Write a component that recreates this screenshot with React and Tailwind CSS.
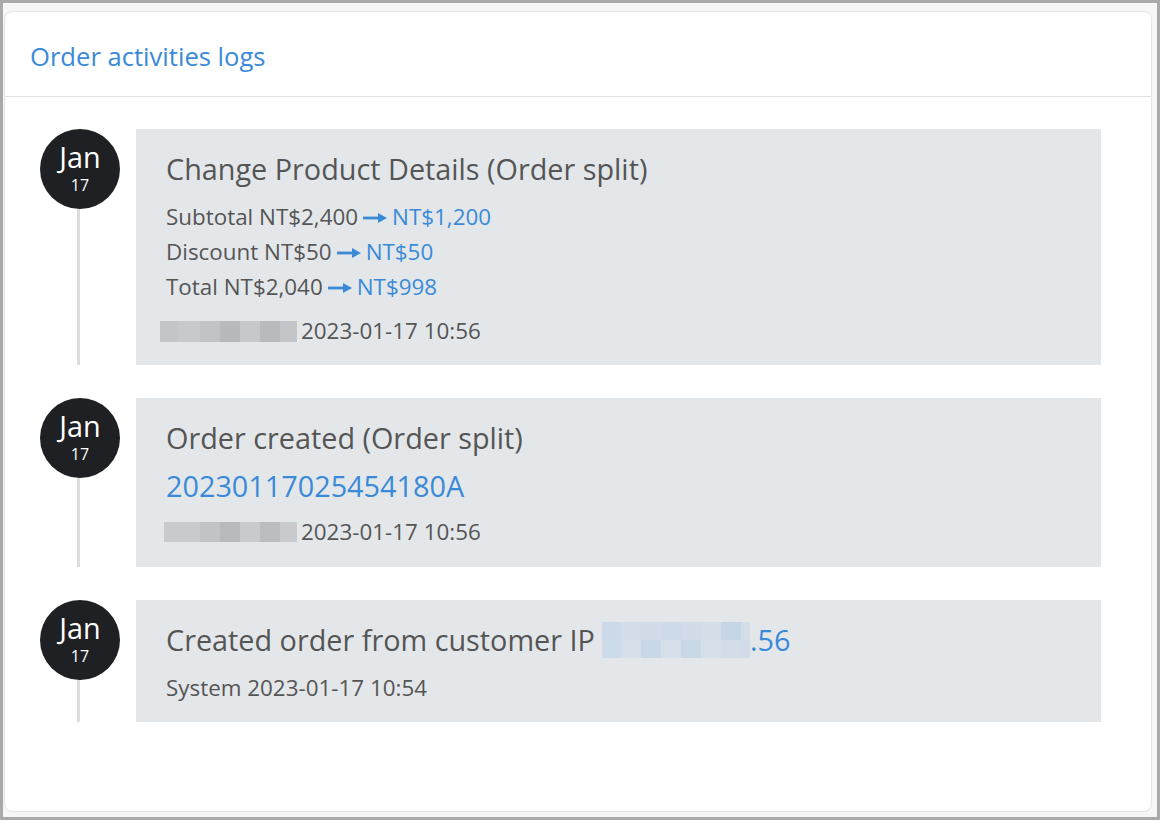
const blueText = "text-[#3a8ad8]";

const grayBlocks1 = ["#c3c5c8", "#c8c9cc", "#c2c3c6", "#b8b9bb", "#c6c8cb", "#b9babc", "#c4c5c8"];
const grayBlocks2 = ["#c9cacd", "#c9cacd", "#c2c3c6", "#b9babc", "#c9cacd", "#bbbcbe", "#c9cacd"];
const ipTop = ["#cbd9e8", "#d3dde9", "#d1dce8", "#cddae7", "#d1dce8", "#d4dee9", "#c6d6e7", "#d4dee9"];
const ipBottom = ["#cddae8", "#d6dfe9", "#c9d8e8", "#d5dfea", "#c9d8e7", "#d5dfea", "#d3dde9", "#d1dce8"];

const Pixelated = ({ colors, widths, className }) => (
  <span className={"inline-flex align-middle " + className}>
    {colors.map((c, i) => (
      <span key={i} className="h-full" style={{ backgroundColor: c, width: widths[i] }} />
    ))}
  </span>
);

const DateBadge = () => (
  <div className="w-20 h-20 shrink-0 rounded-full bg-[#1f2024] text-white flex flex-col items-center justify-center">
    <div className="text-[28.8px] leading-[28px] mt-[-1px]">Jan</div>
    <div className="text-[16px] leading-[18px] mt-[5px]">17</div>
  </div>
);

const TimelineRow = ({ last, children }) => (
  <div className={"flex gap-4 " + (last ? "" : "pb-[33px]")}>
    <div className="flex flex-col items-center w-20 shrink-0">
      <DateBadge />
      <div className="flex-1 w-[3px] bg-[#dcdcdc] ml-[-3px]" />
    </div>
    <div className="flex-1 bg-[#e4e7ea] px-[30px] pt-[22px]">{children}</div>
  </div>
);

const Arrow = () => (
  <svg className="inline-block mx-[5px] align-middle mt-[-3px]" width="24" height="12" viewBox="0 0 24 12" fill="#3a8ad8">
    <rect x="0" y="4.6" width="17" height="2.8" />
    <path d="M15 1 L24 6 L15 11 Z" />
  </svg>
);

export default function App() {
  return (
    <div className="w-[1160px] h-[820px] border-[3px] border-[#a9a9a9] bg-[#f6f6f6] pl-[1px] pt-[8px] pr-[5px] pb-[5px] text-[#555555]" style={{ fontFamily: '"Open Sans", "Noto Sans", sans-serif' }}>
      <div className="h-full bg-white border border-[#e5e5e5] rounded-lg flex flex-col">
        <div className="h-[85px] px-[25px] pt-[6px] flex items-center border-b border-[#e0e0e0]">
          <h2 className={"text-[25.6px] " + blueText}>Order activities logs</h2>
        </div>
        <div className="pt-8 pl-[35px] pr-[50px]">
          <TimelineRow>
            <div className="text-[28.8px] leading-[36px]">Change Product Details (Order split)</div>
            <div className="mt-3 text-[22.4px] leading-[35px]">
              <div>Subtotal NT$2,400<Arrow /><span className={blueText}>NT$1,200</span></div>
              <div>Discount NT$50<Arrow /><span className={blueText}>NT$50</span></div>
              <div>Total NT$2,040<Arrow /><span className={blueText}>NT$998</span></div>
            </div>
            <div className="mt-[13px] pb-5 text-[22.4px] leading-[28px] ml-[-6px] flex items-center">
              <Pixelated colors={grayBlocks1} widths={[18, 22, 20, 20, 20, 20, 17]} className="h-[21px]" />
              <span className="ml-[4px]">2023-01-17 10:56</span>
            </div>
          </TimelineRow>
          <TimelineRow>
            <div className="text-[28.8px] leading-[36px]">Order created (Order split)</div>
            <div className={"text-[28.8px] leading-[40px] mt-[10px] " + blueText}>20230117025454180A</div>
            <div className="mt-[12px] pb-[21px] text-[22.4px] leading-[28px] ml-[-2px] flex items-center">
              <Pixelated colors={grayBlocks2} widths={[18, 18, 20, 20, 20, 20, 17]} className="h-[20px]" />
              <span className="ml-[4px]">2023-01-17 10:56</span>
            </div>
          </TimelineRow>
          <TimelineRow last>
            <div className="text-[28.8px] leading-[36px] flex items-center">
              <span>Created order from customer IP</span>
              <span className="ml-[7px] inline-flex flex-col h-[36px]">
                <Pixelated colors={ipTop} widths={[19, 20, 20, 20, 20, 20, 20, 9]} className="h-[18px]" />
                <Pixelated colors={ipBottom} widths={[19, 20, 20, 20, 20, 20, 20, 9]} className="h-[18px]" />
              </span>
              <span className={blueText}>.56</span>
            </div>
            <div className="mt-[16px] pb-[20px] text-[22.4px] leading-[28px]">System 2023-01-17 10:54</div>
          </TimelineRow>
        </div>
      </div>
    </div>
  );
}
